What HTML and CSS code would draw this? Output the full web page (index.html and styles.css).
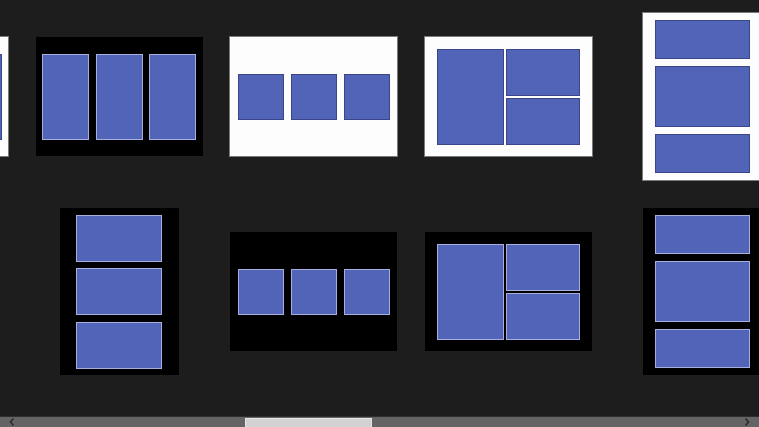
FILE: index.html
```html
<!DOCTYPE html>
<html>
<head>
<meta charset="utf-8">
<title>Layouts</title>
<link rel="stylesheet" href="styles.css">
</head>
<body>
<div class="app">
  <div class="viewport">
    <div class="strip">
      <!-- row 1 -->
      <div class="cell"><div class="tile land white cols3"><div class="p"></div><div class="p"></div><div class="p"></div></div></div>
      <div class="cell"><div class="tile land black cols3"><div class="p"></div><div class="p"></div><div class="p"></div></div></div>
      <div class="cell"><div class="tile land white sq3"><div class="p"></div><div class="p"></div><div class="p"></div></div></div>
      <div class="cell"><div class="tile land white split"><div class="p big"></div><div class="p"></div><div class="p"></div></div></div>
      <div class="cell"><div class="tile port white rowsv"><div class="p s"></div><div class="p m"></div><div class="p s"></div></div></div>
      <!-- row 2 -->
      <div class="cell"><div class="tile port black rows3"><div class="p"></div><div class="p"></div><div class="p"></div></div></div>
      <div class="cell"><div class="tile port black rows3"><div class="p"></div><div class="p"></div><div class="p"></div></div></div>
      <div class="cell"><div class="tile land black sq3"><div class="p"></div><div class="p"></div><div class="p"></div></div></div>
      <div class="cell"><div class="tile land black split"><div class="p big"></div><div class="p"></div><div class="p"></div></div></div>
      <div class="cell"><div class="tile port black rowsv"><div class="p s"></div><div class="p m"></div><div class="p s"></div></div></div>
    </div>
  </div>
  <div class="scrollbar">
    <div class="arrow">
      <svg width="8" height="10" viewBox="0 0 8 10"><path d="M5.5 1.5 L2.5 5 L5.5 8.5" fill="none" stroke="#2b2b2b" stroke-width="1.6"/></svg>
    </div>
    <div class="track"><div class="thumb"></div></div>
    <div class="arrow">
      <svg width="8" height="10" viewBox="0 0 8 10"><path d="M2.5 1.5 L5.5 5 L2.5 8.5" fill="none" stroke="#2b2b2b" stroke-width="1.6"/></svg>
    </div>
  </div>
</div>
</body>
</html>
```

FILE: styles.css
```css
html, body {
  margin: 0;
  padding: 0;
  background: #1d1d1d;
  overflow: hidden;
  font-family: "Liberation Sans", Arial, sans-serif;
}

.app {
  width: 759px;
  height: 427px;
  display: flex;
  flex-direction: column;
}

.viewport {
  flex: 1;
  overflow: hidden;
}

.strip {
  display: grid;
  grid-template-columns: repeat(5, 167px);
  grid-template-rows: 167px 167px;
  column-gap: 27.5px;
  row-gap: 28px;
  padding-top: 13px;
  margin-left: -159px;
  width: max-content;
}

.cell {
  display: flex;
  align-items: center;
  justify-content: center;
}

.tile {
  box-sizing: border-box;
  display: flex;
  align-items: center;
  justify-content: center;
}

.tile.land { width: 167px; height: 119px; }
.tile.port { width: 119px; height: 167px; }

.tile.white { background: #fdfdfd; box-shadow: 0 0 0 1px #7a7a7a; }
.tile.black { background: #000000; }

.p {
  box-sizing: border-box;
  background: #5164b8;
  border: 1px solid #a8afdc;
}
.white .p { border-color: #3a4688; }

/* three tall columns */
.cols3 { gap: 6.5px; padding-top: 1px; }
.cols3 .p { width: 47px; height: 86px; }

/* three squares */
.sq3 { gap: 7px; }
.sq3 .p { width: 46px; height: 46px; }

/* big left + two stacked right */
.tile.split {
  display: grid;
  grid-template-columns: 67px 74px;
  grid-template-rows: 47px 47px;
  gap: 2px;
  align-content: center;
  justify-content: center;
  align-items: stretch;
  justify-items: stretch;
}
.split .big { grid-row: 1 / 3; }

/* three equal rows */
.rows3 { flex-direction: column; gap: 6.5px; }
.rows3 .p { width: 86px; height: 47px; }

/* three rows small / medium / small */
.rowsv { flex-direction: column; gap: 7px; }
.rowsv .p { width: 95px; }
.rowsv .s { height: 38.5px; }
.rowsv .m { height: 61.5px; }

/* scrollbar */
.scrollbar {
  height: 10px;
  display: flex;
  background: #646464;
  border-top: 1px solid #2e2e2e;
}

.arrow {
  width: 24px;
  display: flex;
  align-items: center;
  justify-content: center;
}

.track {
  flex: 1;
  display: flex;
  padding-top: 1px;
}

.thumb {
  box-sizing: border-box;
  width: 127px;
  margin-left: 221px;
  background: #d2d2d2;
  border: 1px solid #e6e6e6;
  border-bottom: none;
}
```
